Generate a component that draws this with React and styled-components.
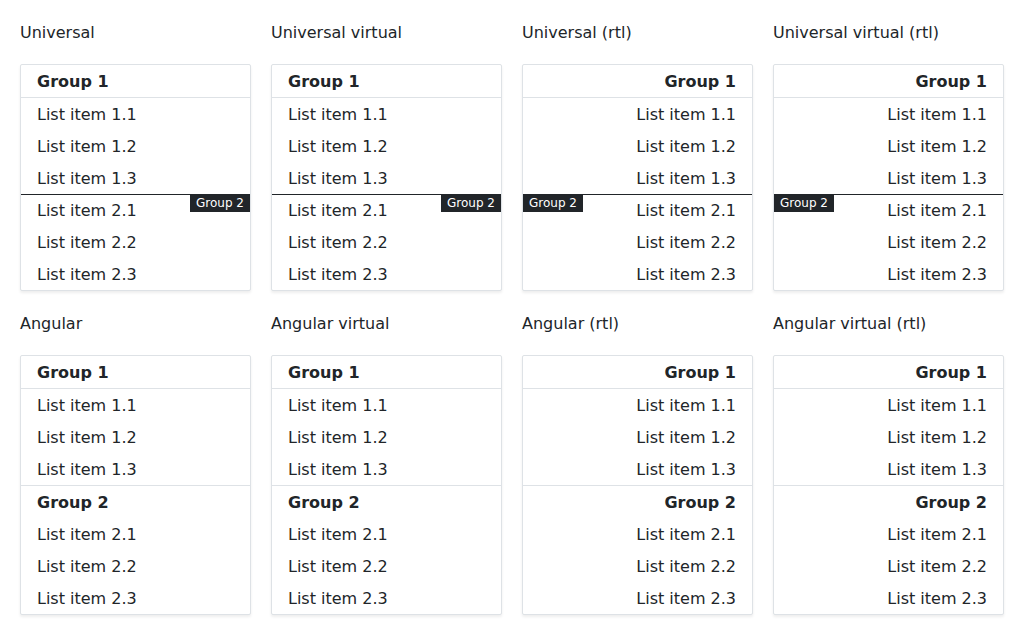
import styled, { createGlobalStyle } from "styled-components";

const GlobalStyle = createGlobalStyle`
  body {
    margin: 0;
    background: #ffffff;
    font-family: "DejaVu Sans", "Noto Sans", sans-serif;
    color: #212529;
  }
`;

const groups = [
  { name: "Group 1", items: ["List item 1.1", "List item 1.2", "List item 1.3"] },
  { name: "Group 2", items: ["List item 2.1", "List item 2.2", "List item 2.3"] },
];

const demos = [
  { title: "Universal", rtl: false, stuck: true },
  { title: "Universal virtual", rtl: false, stuck: true },
  { title: "Universal (rtl)", rtl: true, stuck: true },
  { title: "Universal virtual (rtl)", rtl: true, stuck: true },
  { title: "Angular", rtl: false, stuck: false },
  { title: "Angular virtual", rtl: false, stuck: false },
  { title: "Angular (rtl)", rtl: true, stuck: false },
  { title: "Angular virtual (rtl)", rtl: true, stuck: false },
];

export default function App() {
  return (
    <>
      <GlobalStyle />
      <StyledPage>
        {demos.map((demo) => (
          <StyledDemo key={demo.title}>
            <StyledTitle>{demo.title}</StyledTitle>
            <StyledCard dir={demo.rtl ? "rtl" : "ltr"}>
              {groups.map((group, index) => (
                <StyledGroup key={group.name} $first={index === 0} $stuck={demo.stuck}>
                  {index > 0 && demo.stuck ? (
                    <StyledStickyHeader>
                      <StyledBadge $rtl={demo.rtl}>{group.name}</StyledBadge>
                    </StyledStickyHeader>
                  ) : (
                    <StyledGroupHeader $first={index === 0}>{group.name}</StyledGroupHeader>
                  )}
                  {group.items.map((item) => (
                    <StyledItem key={item}>{item}</StyledItem>
                  ))}
                </StyledGroup>
              ))}
            </StyledCard>
          </StyledDemo>
        ))}
      </StyledPage>
    </>
  );
}

const StyledPage = styled.div`
  display: grid;
  grid-template-columns: repeat(4, 231px);
  column-gap: 20px;
  row-gap: 20px;
  padding: 20px;
`;

const StyledDemo = styled.div`
  display: flex;
  flex-direction: column;
  gap: 20px;
`;

const StyledTitle = styled.div`
  height: 24px;
  font-size: 16px;
  line-height: 26px;
  color: #212529;
`;

const StyledCard = styled.div`
  border: 1px solid #dee2e6;
  border-radius: 2px;
  background: #ffffff;
  box-shadow: 0 2px 3px rgba(0, 0, 0, 0.07);
  overflow: hidden;
`;

const StyledGroup = styled.div`
  position: relative;
  border-top: ${(p) => (p.$first || p.$stuck ? "none" : "1px solid #dee2e6")};
`;

const StyledGroupHeader = styled.div`
  height: 32px;
  line-height: 34px;
  padding: 0 16px;
  font-size: 16px;
  font-weight: bold;
  color: #212529;
  border-bottom: ${(p) => (p.$first ? "1px solid #dee2e6" : "none")};
`;

const StyledStickyHeader = styled.div`
  position: relative;
  height: 0;
  border-top: 1px solid #212529;
  margin-bottom: -1px;
  z-index: 1;
`;

const StyledBadge = styled.span`
  position: absolute;
  top: -1px;
  ${(p) => (p.$rtl ? "left: 0;" : "right: 0;")}
  height: 18px;
  line-height: 19px;
  padding: 0 6px;
  font-size: 12px;
  color: #ffffff;
  background: #212529;
`;

const StyledItem = styled.div`
  height: 32px;
  line-height: 34px;
  padding: 0 16px;
  font-size: 16px;
  color: #212529;
`;
